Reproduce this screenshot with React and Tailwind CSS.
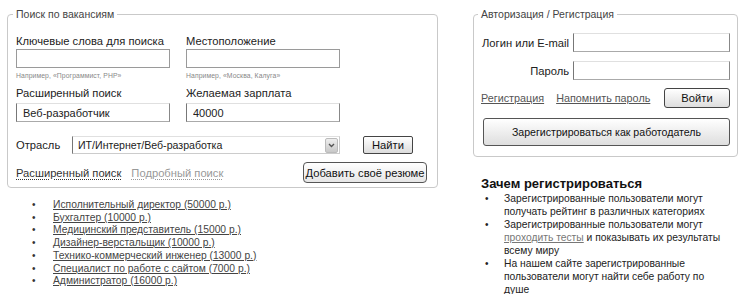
import React from 'react'

const vacancies = [
  'Исполнительный директор (50000 р.)',
  'Бухгалтер (10000 р.)',
  'Медицинский представитель (15000 р.)',
  'Дизайнер-верстальщик (10000 р.)',
  'Технико-коммерческий инженер (13000 р.)',
  'Специалист по работе с сайтом (7000 р.)',
  'Администратор (16000 р.)',
]

const inputCls =
  'block h-[19px] w-[154px] border border-[#9a9a9a] bg-white px-[6px] text-[11px] text-[#222] outline-none'
const insetCls =
  'block h-[19px] w-[154px] border border-t-[#e0e0e0] border-l-[#777] border-r-[#888] border-b-[#aaa] bg-white px-[6px] text-[11px] text-[#222] outline-none'

const App = () => {
  return (
    <div className="flex h-[294px] w-[750px] bg-white [font-family:'Liberation_Sans',Arial,sans-serif] text-[#222]">
      {/* Left column */}
      <div className="w-[473px] pl-[7px] pt-[8px]">
        <fieldset className="w-[431px] rounded-[4px] border border-[#c9c9c9] px-[8px] pb-[4px]">
          <legend className="ml-[-3px] px-[3px] text-[10.5px] leading-[13px] text-[#444]">Поиск по вакансиям</legend>

          <div className="mt-[13px] grid grid-cols-[154px_154px] gap-x-[16px]">
            <div>
              <div className="text-[11.2px] leading-[14px]">Ключевые слова для поиска</div>
              <input className={`mt-[1px] ${inputCls}`} />
              <div className="mt-[3px] text-[6.8px] leading-[10px] tracking-[0.1px] text-[#888]">Например, «Программист, PHP»</div>
            </div>
            <div>
              <div className="text-[11.2px] leading-[14px]">Местоположение</div>
              <input className={`mt-[1px] ${inputCls}`} />
              <div className="mt-[3px] text-[6.8px] leading-[10px] tracking-[0.1px] text-[#888]">Например, «Москва, Калуга»</div>
            </div>
            <div className="mt-[5px]">
              <div className="text-[11.2px] leading-[14px]">Расширенный поиск</div>
              <input className={`mt-[3px] ${insetCls}`} defaultValue="Веб-разработчик" />
            </div>
            <div className="mt-[5px]">
              <div className="text-[11.2px] leading-[14px]">Желаемая зарплата</div>
              <input className={`mt-[3px] ${insetCls}`} defaultValue="40000" />
            </div>
          </div>

          <div className="mt-[14px] flex items-center">
            <span className="w-[56px] text-[11.2px] leading-[14px]">Отрасль</span>
            <div className="flex h-[18px] w-[268px] items-center border border-t-[#e0e0e0] border-l-[#777] border-r-[#ccc] border-b-[#ccc] bg-white pl-[5px] pr-[1px]">
              <span className="flex-1 text-[10.6px] leading-[14px]">ИТ/Интернет/Веб-разработка</span>
              <span className="flex h-[15px] w-[13px] items-center justify-center rounded-[2px] border border-[#bbb] bg-gradient-to-b from-[#eee] to-[#c8c8c8]">
                <svg width="7" height="5" viewBox="0 0 7 5">
                  <path d="M1 1 L3.5 3.5 L6 1" fill="none" stroke="#555" strokeWidth="1.4" />
                </svg>
              </span>
            </div>
            <button className="ml-[23px] h-[18px] w-[50px] rounded-[2px] border border-[#444] bg-gradient-to-b from-white to-[#dcdcdc] text-[11.2px] leading-[14px] text-[#111]">
              Найти
            </button>
          </div>

          <div className="mt-[8px] flex items-center">
            <a className="text-[11.2px] leading-[14px] text-[#333] underline decoration-dotted underline-offset-2">Расширенный поиск</a>
            <a className="ml-[10px] text-[11.2px] leading-[14px] text-[#999] underline decoration-dotted underline-offset-2">Подробный поиск</a>
            <button className="ml-auto mr-[2px] h-[21px] w-[124px] whitespace-nowrap rounded-[4px] border border-[#555] bg-gradient-to-b from-white to-[#e6e6e6] text-[11.2px] leading-[14px] text-[#111]">
              Добавить своё резюме
            </button>
          </div>
        </fieldset>

        <ul className="mt-[11px] pl-[25px] text-[10.3px] leading-[12.7px]">
          {vacancies.map((v) => (
            <li key={v} className="flex items-center">
              <span className="w-[21px] text-[10px] text-[#333]">•</span>
              <a className="text-[#444] underline underline-offset-1">{v}</a>
            </li>
          ))}
        </ul>
      </div>

      {/* Right column */}
      <div className="w-[277px] pt-[8px]">
        <fieldset className="w-[265px] rounded-[4px] border border-[#c9c9c9] px-[7px] pb-[10px]">
          <legend className="ml-[-3px] px-[3px] text-[10.5px] leading-[13px] text-[#444]">Авторизация / Регистрация</legend>

          <div className="mt-[12px] grid grid-cols-[1fr_157px] items-center gap-x-[4px] gap-y-[9px]">
            <span className="whitespace-nowrap text-right text-[11.2px] leading-[14px]">Логин или E-mail</span>
            <input className="block h-[19px] w-[157px] border border-t-[#e0e0e0] border-l-[#777] border-r-[#888] border-b-[#aaa] bg-white outline-none" />
            <span className="text-right text-[11.2px] leading-[14px]">Пароль</span>
            <input className="block h-[19px] w-[157px] border border-t-[#e0e0e0] border-l-[#777] border-r-[#888] border-b-[#aaa] bg-white outline-none" />
          </div>

          <div className="mt-[8px] flex items-center">
            <a className="text-[10.8px] leading-[13px] text-[#555] underline underline-offset-1">Регистрация</a>
            <a className="ml-[12px] text-[10.8px] leading-[13px] text-[#555] underline underline-offset-1">Напомнить пароль</a>
            <button className="ml-auto h-[20px] w-[66px] rounded-[3px] border border-[#444] bg-gradient-to-b from-white to-[#dedede] text-[11.2px] leading-[14px] text-[#111]">
              Войти
            </button>
          </div>

          <button className="mt-[10px] ml-[2px] h-[28px] w-[247px] rounded-[3px] border border-[#555] bg-gradient-to-b from-white to-[#dedede] text-[10.6px] leading-[13px] text-[#111]">
            Зарегистрироваться как работодатель
          </button>
        </fieldset>

        <div className="mt-[19px] pl-[8px]">
          <h3 className="text-[13px] font-bold leading-[15px] text-[#111]">Зачем регистрироваться</h3>
          <ul className="mt-[1px] whitespace-nowrap text-[10.3px] leading-[13px] text-[#222]">
            <li className="flex">
              <span className="w-[23px] shrink-0 pl-[4px] text-[10px]">•</span>
              <span>
                Зарегистрированные пользователи могут
                <br />
                получать рейтинг в различных категориях
              </span>
            </li>
            <li className="flex">
              <span className="w-[23px] shrink-0 pl-[4px] text-[10px]">•</span>
              <span>
                Зарегистрированные пользователи могут
                <br />
                <a className="text-[#777] underline underline-offset-1">проходить тесты</a> и показывать их результаты
                <br />
                всему миру
              </span>
            </li>
            <li className="flex">
              <span className="w-[23px] shrink-0 pl-[4px] text-[10px]">•</span>
              <span>
                На нашем сайте зарегистрированные
                <br />
                пользователи могут найти себе работу по
                <br />
                душе
              </span>
            </li>
          </ul>
        </div>
      </div>
    </div>
  )
}

export default App
